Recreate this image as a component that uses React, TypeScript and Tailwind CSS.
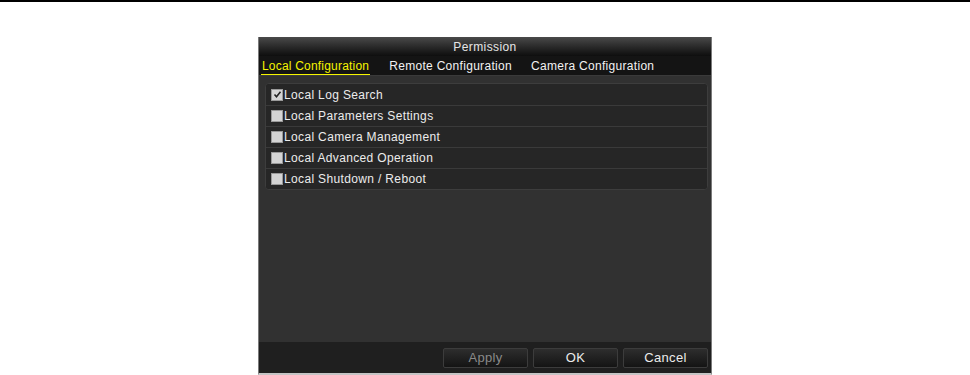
import React from "react";

const items = [
  { label: "Local Log Search", checked: true },
  { label: "Local Parameters Settings", checked: false },
  { label: "Local Camera Management", checked: false },
  { label: "Local Advanced Operation", checked: false },
  { label: "Local Shutdown / Reboot", checked: false },
];

function Box({ checked }: { checked: boolean }) {
  return (
    <div className="w-[12px] h-[12px] bg-[#d4d4d4] border border-[#9a9a9a] flex items-center justify-center shrink-0">
      {checked && (
        <svg width="9" height="9" viewBox="0 0 9 9">
          <path d="M1.5 4.5 L3.5 6.8 L7.5 1.8" stroke="#222" strokeWidth="1.6" fill="none" />
        </svg>
      )}
    </div>
  );
}

function Btn({ label, disabled }: { label: string; disabled?: boolean }) {
  return (
    <div
      className={`w-[85px] h-[20px] rounded-[2px] border border-[#3c3c3c] bg-gradient-to-b from-[#2e2e2e] to-[#141414] flex items-center justify-center text-[13px] tracking-[0.3px] ${
        disabled ? "text-[#8a8a8a]" : "text-[#ececec]"
      }`}
    >
      {label}
    </div>
  );
}

export default function App() {
  return (
    <div
      className="w-[970px] h-[375px] bg-white relative overflow-hidden"
      style={{ fontFamily: '"Liberation Sans", Arial, sans-serif' }}
    >
      <div className="h-[2px] bg-black w-full" />
      <div className="flex justify-start pl-[258px] pt-[35px]">
        <div className="w-[454px] h-[338px] flex flex-col border-l border-r border-[#7a7a7a] border-b-2 border-b-[#c4c4c4]">
          <div className="h-[19px] bg-gradient-to-b from-[#4a4a4a] to-[#0e0e0e] flex items-center justify-center text-[12px] text-[#e6e6e6] tracking-[0.4px]">
            Permission
          </div>
          <div className="h-[20px] bg-[#141414] border-b border-[#3a3a3a] flex items-end pl-[2px] text-[12px] tracking-[0.3px] text-[#f2f2f2]">
            <div className="text-[#f5f500] border-b border-[#f5f500] pb-[0px] px-[1px] leading-[16px] tracking-[0.2px]">Local Configuration</div>
            <div className="ml-[19px] pb-[1px] leading-[16px]">Remote Configuration</div>
            <div className="ml-[19px] pb-[1px] leading-[16px]">Camera Configuration</div>
          </div>
          <div className="flex-1 bg-[#313131] pt-[7px] pl-[6px] pr-[3px]">
            <div className="rounded-[4px] border border-[#3d3d3d] bg-[#222] flex flex-col overflow-hidden">
              {items.map((it, i) => (
                <div
                  key={it.label}
                  className={`h-[21px] flex items-center pl-[5px] gap-[1px] bg-[#262626] ${
                    i > 0 ? "border-t border-[#3a3a3a]" : ""
                  }`}
                >
                  <Box checked={it.checked} />
                  <span className="text-[12px] text-[#ececec] tracking-[0.35px]">{it.label}</span>
                </div>
              ))}
            </div>
          </div>
          <div className="h-[31px] bg-[#1f1f1f] flex items-center justify-end gap-[5px] pr-[3px]">
            <Btn label="Apply" disabled />
            <Btn label="OK" />
            <Btn label="Cancel" />
          </div>
        </div>
      </div>
    </div>
  );
}
